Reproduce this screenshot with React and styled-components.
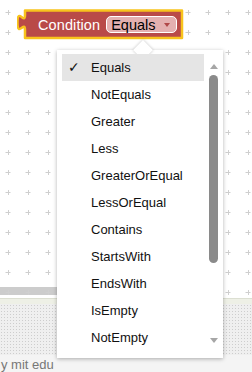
import React from 'react'
import styled, { createGlobalStyle } from 'styled-components'

const GlobalStyle = createGlobalStyle`
  html, body {
    margin: 0;
    padding: 0;
    background: #fff;
    overflow: hidden;
  }
  body {
    font-family: "Liberation Sans", Arial, sans-serif;
  }
`

const Page = styled.div`
  position: relative;
  width: 252px;
  height: 372px;
  display: flex;
  flex-direction: column;
  overflow: hidden;
`

const Workspace = styled.div`
  position: relative;
  height: 301px;
  background: #fff;
  display: flex;
  flex-direction: column;
  justify-content: flex-end;
`

const Grid = styled.svg`
  position: absolute;
  left: 0;
  top: 0;
`

const HScroll = styled.div`
  height: 8px;
  width: 200px;
  margin-bottom: 3px;
  background: #cccccc;
  border-radius: 0 4px 4px 0;
`

const Divider = styled.div`
  height: 5px;
  background: #eef0e6;
  border-top: 1px solid #dcdfd2;
`

const Dotted = styled.div`
  height: 51px;
  background-color: #efefef;
  background-image: radial-gradient(#cdcdcd 0.7px, transparent 0.9px);
  background-size: 3px 3px;
`

const Footer = styled.div`
  flex: 1;
  background: #f4f4f4;
  color: #777;
  font-size: 13px;
  padding: 3px 0 0 1px;
  line-height: 14px;
`

const Block = styled.div`
  position: absolute;
  left: 17px;
  top: 9px;
  width: 168px;
  height: 31px;
`

const BlockShape = styled.svg`
  position: absolute;
  left: 0;
  top: 0;
`

const BlockRow = styled.div`
  position: relative;
  display: flex;
  align-items: center;
  height: 31px;
  padding-left: 21px;
  gap: 6px;
`

const BlockLabel = styled.span`
  color: #fff;
  font-size: 14.5px;
  letter-spacing: 0.1px;
`

const Field = styled.div`
  display: flex;
  align-items: center;
  box-sizing: border-box;
  width: 71px;
  height: 17px;
  padding: 0 6px 0 4px;
  background: #e4b0b0;
  border: 1.5px solid #fff;
  border-radius: 5px;
  color: #000;
  font-size: 14.5px;
  justify-content: space-between;
`

const FieldArrow = styled.span`
  width: 0;
  height: 0;
  border-left: 3px solid transparent;
  border-right: 3px solid transparent;
  border-top: 4px solid #b04848;
  margin-top: 1px;
`

const Menu = styled.div`
  position: absolute;
  z-index: 10;
  left: 57px;
  top: 50px;
  width: 166px;
  height: 308px;
  background: #fff;
  box-shadow: 0 1px 4px rgba(0, 0, 0, 0.3);
  display: flex;

  &::before {
    content: '';
    position: absolute;
    z-index: -1;
    left: 79px;
    top: -7px;
    width: 14px;
    height: 14px;
    background: #fff;
    transform: rotate(45deg);
    box-shadow: 0 0 3px rgba(0, 0, 0, 0.25);
  }
`

const MenuList = styled.div`
  width: 142px;
  padding: 4px 0 0 5px;
  display: flex;
  flex-direction: column;
`

const MenuItem = styled.div`
  position: relative;
  height: 27px;
  display: flex;
  align-items: center;
  padding-left: 29px;
  font-size: 13px;
  color: #111;
  background: ${p => (p.$selected ? '#e5e5e5' : 'transparent')};
`

const Check = styled.span`
  position: absolute;
  left: 6px;
  top: 5px;
  font-size: 14px;
  font-family: "DejaVu Sans", sans-serif;
`

const ScrollCol = styled.div`
  width: 15px;
  margin-left: 2px;
  display: flex;
  flex-direction: column;
  align-items: center;
`

const Arrow = styled.span`
  width: 0;
  height: 0;
  border-left: 4px solid transparent;
  border-right: 4px solid transparent;
  ${p => (p.$down ? 'border-top: 5px solid #a6a6a6;' : 'border-bottom: 5px solid #a6a6a6;')}
`

const Thumb = styled.div`
  width: 9px;
  height: 188px;
  border-radius: 5px;
  background: #8a8a8a;
  margin: 6px 0 75px;
`

const options = [
  'Equals', 'NotEquals', 'Greater', 'Less', 'GreaterOrEqual', 'LessOrEqual',
  'Contains', 'StartsWith', 'EndsWith', 'IsEmpty', 'NotEmpty',
]

const GridDots = () => {
  const xs = []
  for (let x = 8; x < 252; x += 20) xs.push(x)
  const ys = []
  for (let y = 12; y < 300; y += 20) ys.push(y)
  return (
    <Grid width="252" height="301">
      {ys.map(y =>
        xs.map(x => (
          <g key={x + '-' + y} stroke="#cfcfcf" strokeWidth="1">
            <line x1={x - 2.5} y1={y + 0.5} x2={x + 2.5} y2={y + 0.5} />
            <line x1={x + 0.5} y1={y - 2} x2={x + 0.5} y2={y + 3} />
          </g>
        ))
      )}
    </Grid>
  )
}

const App = () => {
  return (
    <Page>
      <GlobalStyle />
      <Workspace>
        <GridDots />
        <Block>
          <BlockShape width="168" height="31">
            <path
              d="M8,1.5 H165 V29 H8 V21 C8,11 0.5,29 0.5,13.5 C0.5,-2 8,16 8,6 Z"
              fill="#b94a48"
              stroke="#f8c31c"
              strokeWidth="2.5"
              strokeLinejoin="round"
            />
          </BlockShape>
          <BlockRow>
            <BlockLabel>Condition</BlockLabel>
            <Field>
              <span>Equals</span>
              <FieldArrow />
            </Field>
          </BlockRow>
        </Block>
        <HScroll />
      </Workspace>
      <Divider />
      <Dotted />
      <Footer>y mit edu</Footer>

      <Menu>
        <MenuList>
          {options.map((o, i) => (
            <MenuItem key={o} $selected={i === 0}>
              {i === 0 && <Check>✓</Check>}
              {o}
            </MenuItem>
          ))}
        </MenuList>
        <ScrollCol>
          <Arrow style={{ marginTop: 14 }} />
          <Thumb />
          <Arrow $down />
        </ScrollCol>
      </Menu>
    </Page>
  )
}

export default App
